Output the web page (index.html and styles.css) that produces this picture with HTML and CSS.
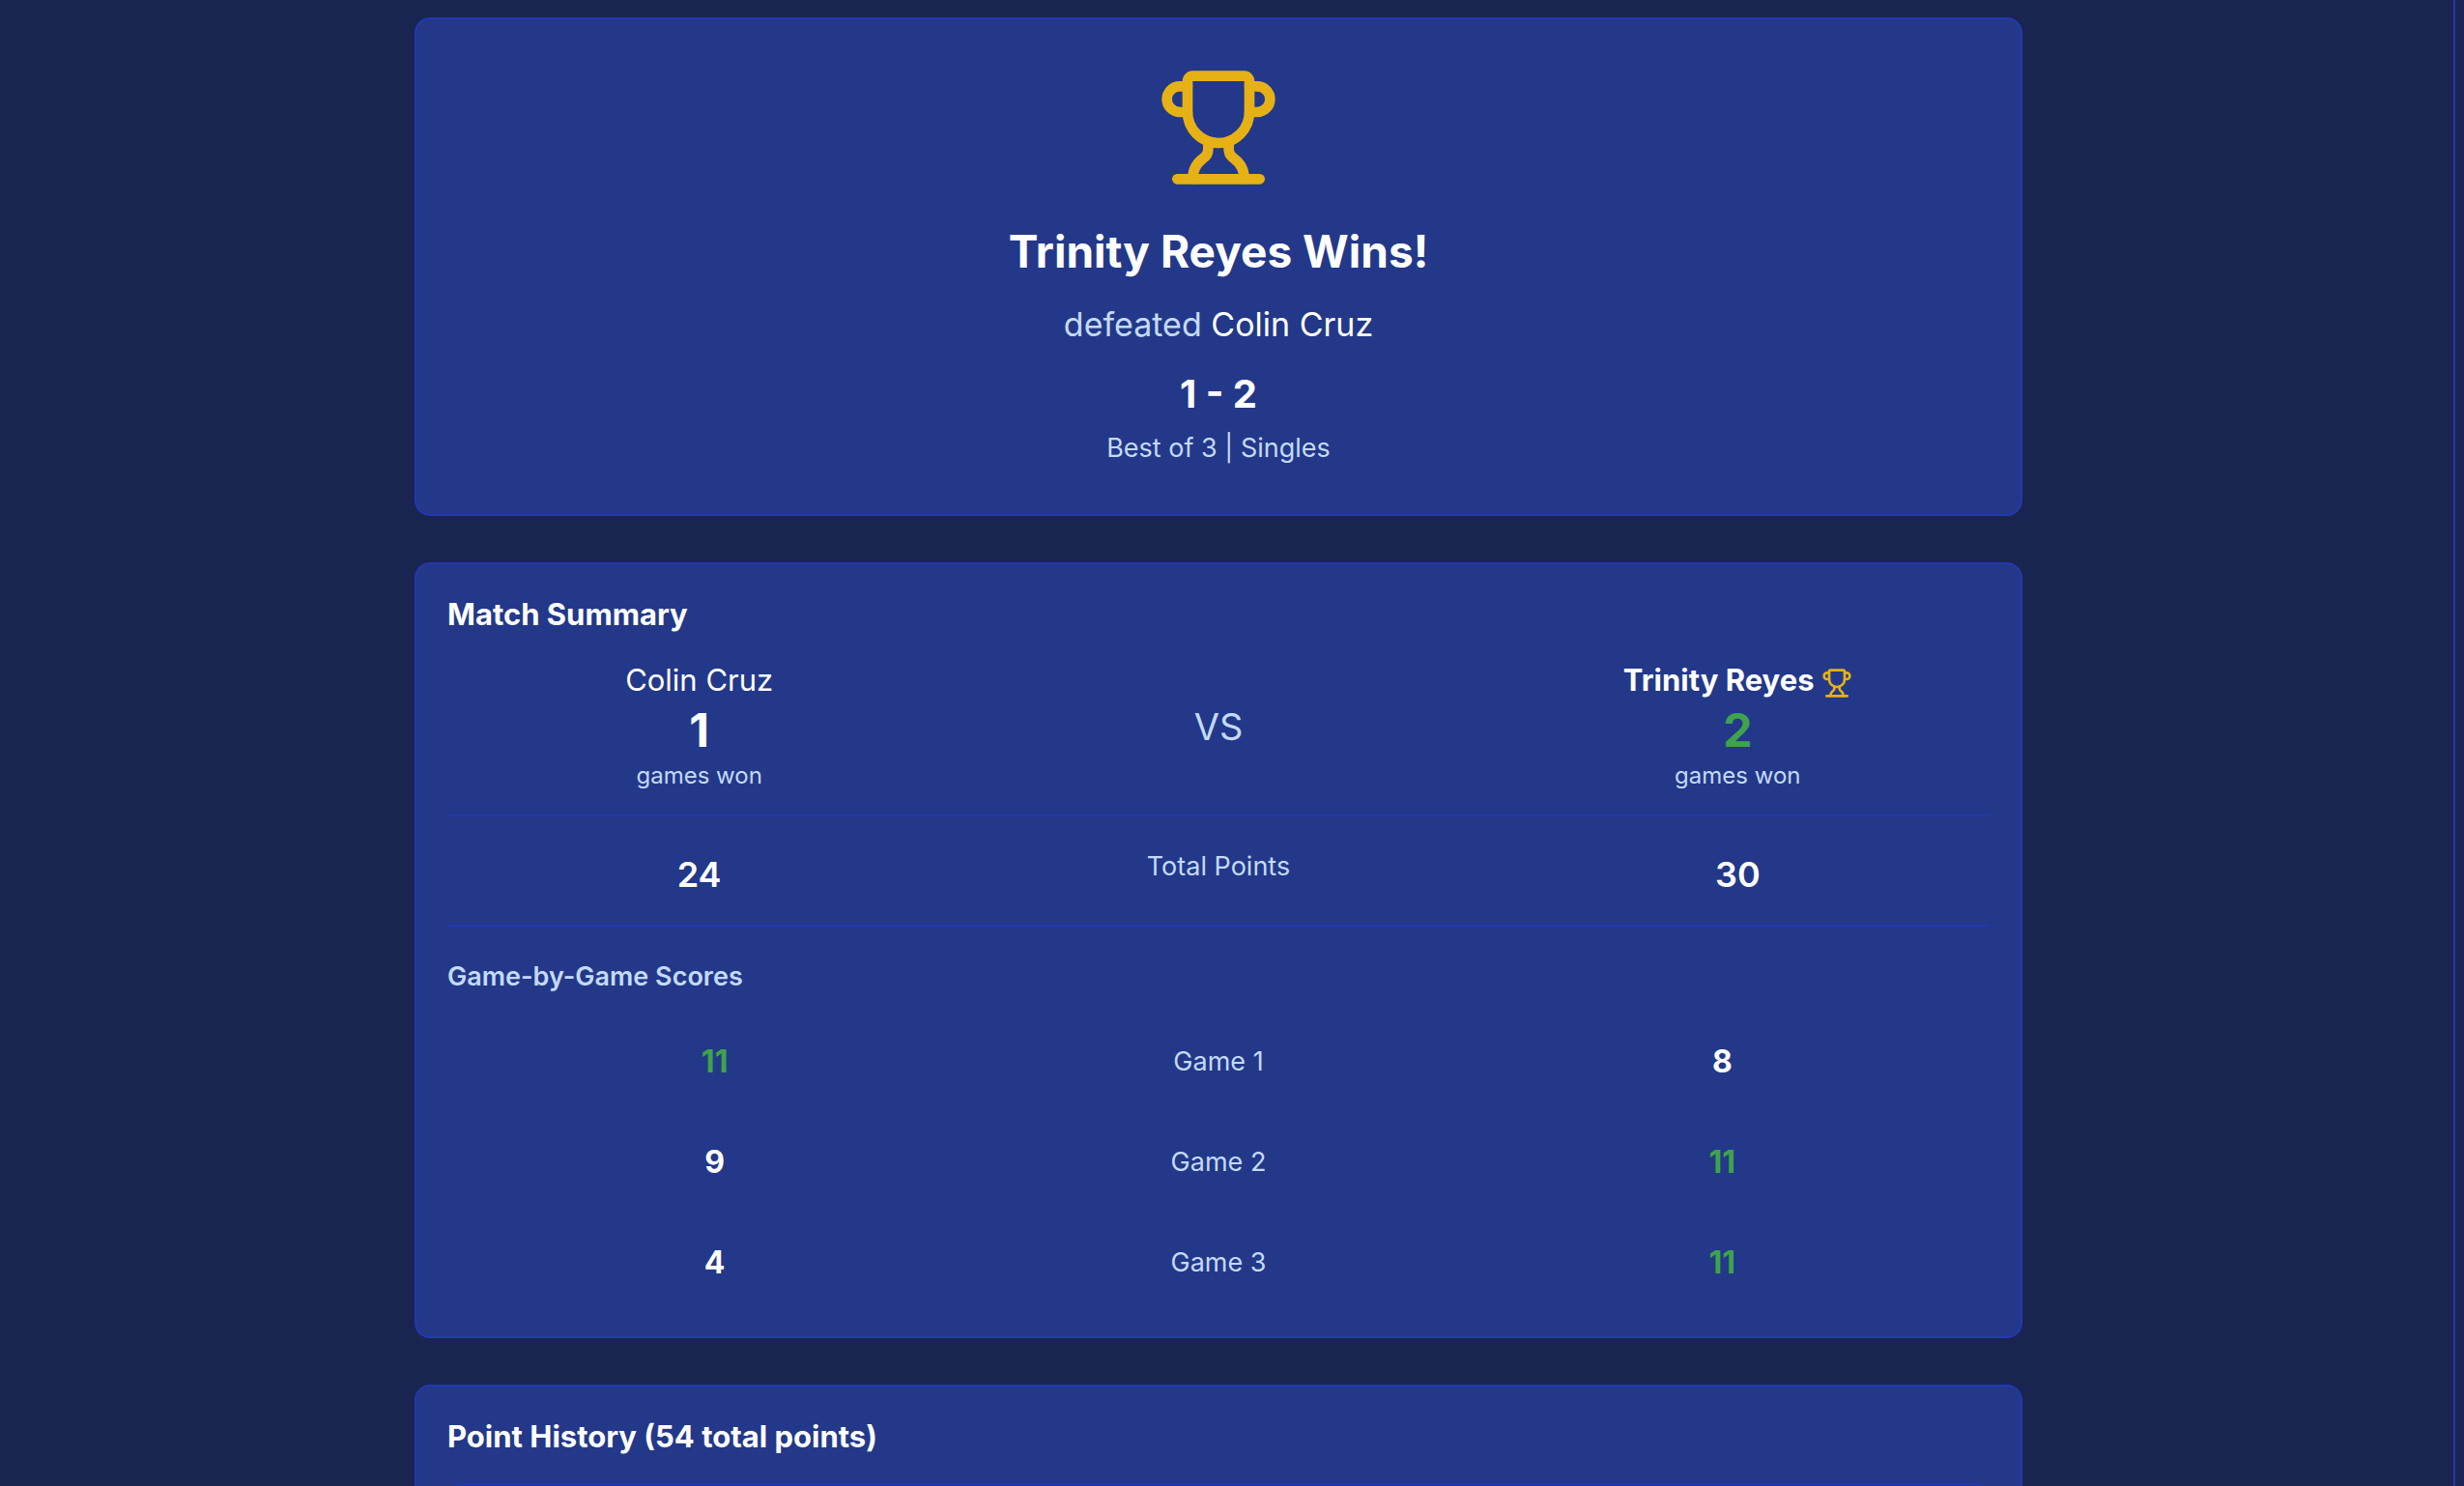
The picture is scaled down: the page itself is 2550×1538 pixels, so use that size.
FILE: index.html
```
<!DOCTYPE html>
<html lang="en">

<head>
    <meta charset="UTF-8">
    <meta name="viewport" content="width=device-width, initial-scale=1.0">
    <title>Match Results</title>
    <link rel="stylesheet" href="styles.css">
</head>

<body>

    <!-- Trophy icon, shared by the banner and the winner's name -->
    <svg class="sprite" aria-hidden="true">
        <symbol id="trophy" viewBox="0 0 24 24">
            <path d="M10 14.66v1.626a2 2 0 0 1-.976 1.696A5 5 0 0 0 7 21.978" />
            <path d="M14 14.66v1.626a2 2 0 0 0 .976 1.696A5 5 0 0 1 17 21.978" />
            <path d="M18 9h1.5a1 1 0 0 0 0-5H18" />
            <path d="M4 22h16" />
            <path d="M6 9a6 6 0 0 0 12 0V3a1 1 0 0 0-1-1H7a1 1 0 0 0-1 1z" />
            <path d="M6 9H4.5a1 1 0 0 1 0-5H6" />
        </symbol>
    </svg>

    <main class="page">
        <div class="container">
            <section class="card banner">
                <svg class="trophy trophy-large" aria-hidden="true"><use href="#trophy" /></svg>
                <h1>Trinity Reyes Wins!</h1>
                <p class="defeated">defeated <span>Colin Cruz</span></p>
                <p class="final-score">1 - 2</p>
                <p class="format">Best of 3 | Singles</p>
            </section>

            <section class="card">
                <h2>Match Summary</h2>

                <div class="row players">
                    <div>
                        <p class="name">Colin Cruz</p>
                        <p class="games">1</p>
                        <p class="caption">games won</p>
                    </div>
                    <div class="versus">VS</div>
                    <div>
                        <p class="name winner">Trinity Reyes <svg class="trophy trophy-small" aria-hidden="true"><use href="#trophy" /></svg></p>
                        <p class="games win">2</p>
                        <p class="caption">games won</p>
                    </div>
                </div>

                <div class="row totals">
                    <div class="points">24</div>
                    <div class="label">Total Points</div>
                    <div class="points">30</div>
                </div>

                <h3>Game-by-Game Scores</h3>
                <div class="game-list">
                    <div class="row game">
                        <div class="score win">11</div>
                        <div class="label">Game 1</div>
                        <div class="score">8</div>
                    </div>
                    <div class="row game">
                        <div class="score">9</div>
                        <div class="label">Game 2</div>
                        <div class="score win">11</div>
                    </div>
                    <div class="row game">
                        <div class="score">4</div>
                        <div class="label">Game 3</div>
                        <div class="score win">11</div>
                    </div>
                </div>
            </section>

            <section class="card">
                <h2>Point History (54 total points)</h2>
                <div class="history"></div>
            </section>
        </div>
    </main>
    <div class="rail"></div>

</body>
</html>
```
FILE: styles.css
```
* {
    box-sizing: border-box;
}

body {
    font-family: Inter, 'Liberation Sans', sans-serif;
    background-color: #1a2450;
    color: #ffffff;
    display: flex;
    height: 100vh;
    margin: 0;
    overflow: hidden;
}

h1, h2, h3, p {
    margin: 0;
}

.sprite {
    display: none;
}

.page {
    flex: 1;
    padding-top: 18px;
}

.container {
    display: flex;
    flex-direction: column;
    gap: 48px;
    max-width: 1664px;
    margin: 0 auto;
}

/* Strip along the right edge of the window */
.rail {
    width: 28px;
    border-right: 9px solid #1a2450;
    box-shadow: inset -2px 0 #2139b0;
}

.card {
    background-color: #233888;
    border: 2px solid #2139b0;
    border-radius: 16px;
    padding: 32px;
}

.banner {
    padding: 48px;
    text-align: center;
}

.trophy {
    fill: none;
    stroke: #e6b116;
    stroke-width: 2;
    stroke-linecap: round;
    stroke-linejoin: round;
}

.trophy-large {
    display: block;
    width: 128px;
    height: 128px;
    margin: 0 auto 32px;
}

.trophy-small {
    width: 32px;
    height: 32px;
    vertical-align: -8px;
}

h1 {
    font-size: 46px;
    line-height: 64px;
    margin-bottom: 16px;
}

.defeated {
    color: #c3dafc;
    font-size: 34px;
    line-height: 56px;
    margin-bottom: 16px;
}

.defeated span {
    color: #ffffff;
}

.final-score {
    font-size: 40px;
    font-weight: 700;
    line-height: 56px;
    margin-bottom: 8px;
}

.format,
.label {
    color: #c3dafc;
    font-size: 27px;
    line-height: 40px;
}

h2 {
    font-size: 31px;
    font-weight: 700;
    line-height: 40px;
    margin-bottom: 28px;
}

.row {
    display: grid;
    grid-template-columns: repeat(3, 1fr);
    gap: 16px;
    text-align: center;
}

.players {
    align-items: center;
    padding-bottom: 24px;
    border-bottom: 2px solid #2139b0;
}

.name {
    font-size: 31px;
    line-height: 40px;
}

.winner {
    font-weight: 700;
}

.games {
    font-size: 48px;
    font-weight: 700;
    line-height: 63px;
}

.caption {
    color: #c3dafc;
    font-size: 24px;
    line-height: 32px;
}

.versus {
    color: #c3dafc;
    font-size: 38px;
    line-height: 56px;
}

.totals {
    padding: 32px 0 24px;
    border-bottom: 2px solid #2139b0;
}

.points {
    font-size: 36px;
    font-weight: 600;
    line-height: 56px;
}

h3 {
    color: #c3dafc;
    font-size: 27px;
    font-weight: 600;
    line-height: 40px;
    margin: 32px 0 24px;
}

.game-list {
    display: flex;
    flex-direction: column;
    gap: 16px;
}

.game {
    align-items: center;
    padding: 24px;
}

.score {
    font-size: 32px;
    font-weight: 700;
    line-height: 40px;
}

.win {
    color: #3fa34d;
}

.history {
    height: 400px;
    border: 2px solid #2139b0;
    border-radius: 16px;
}
```
